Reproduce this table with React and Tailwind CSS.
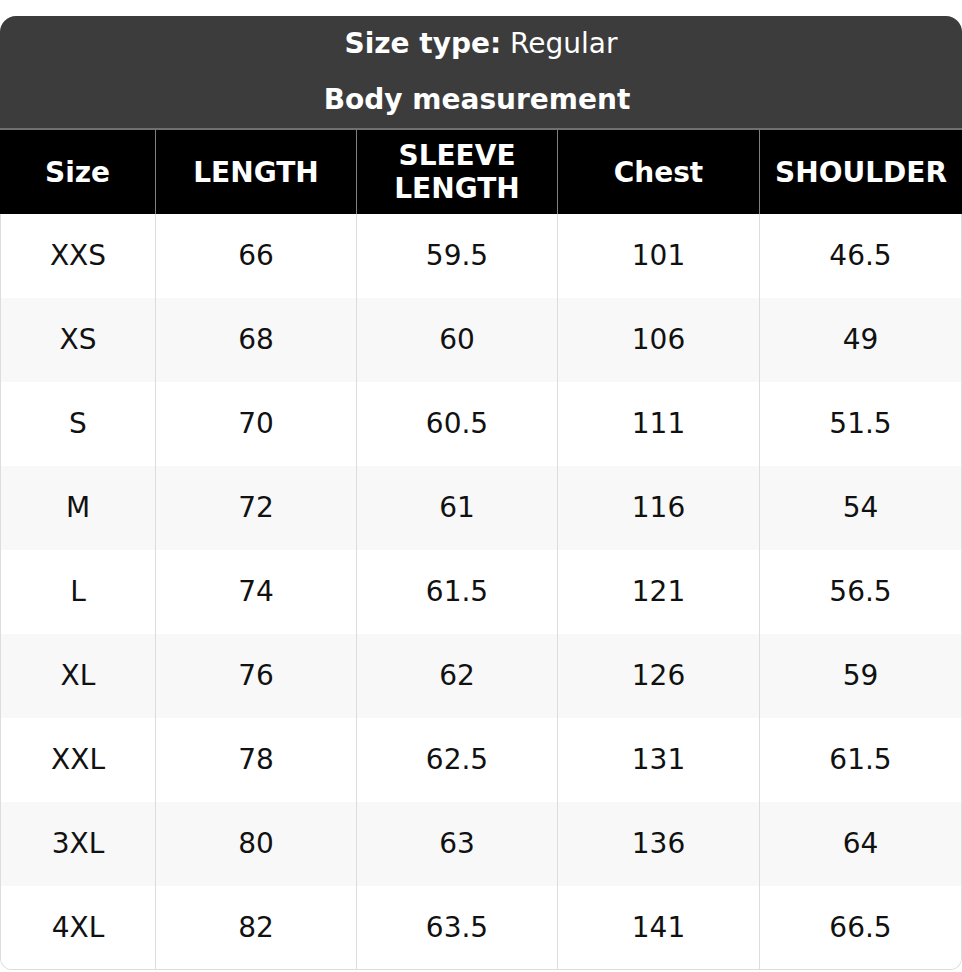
import React from "react";

const rows = [
  ["XXS", "66", "59.5", "101", "46.5"],
  ["XS", "68", "60", "106", "49"],
  ["S", "70", "60.5", "111", "51.5"],
  ["M", "72", "61", "116", "54"],
  ["L", "74", "61.5", "121", "56.5"],
  ["XL", "76", "62", "126", "59"],
  ["XXL", "78", "62.5", "131", "61.5"],
  ["3XL", "80", "63", "136", "64"],
  ["4XL", "82", "63.5", "141", "66.5"],
];

const heads = ["Size", "LENGTH", "SLEEVE LENGTH", "Chest", "SHOULDER"];

export default function App() {
  return (
    <div
      className="w-[962px] bg-white pt-[16px]"
      style={{ fontFamily: '"DejaVu Sans", sans-serif' }}
    >
      <div className="bg-[#3c3c3c] rounded-t-[16px] text-white text-[28px]">
        <div className="h-[56px] flex items-center justify-center">
          <span className="font-bold">Size type:</span>
          <span>&nbsp;Regular</span>
        </div>
        <div className="h-[56px] flex items-center justify-center font-bold pr-[8px]">
          Body measurement
        </div>
      </div>
      <div className="grid grid-cols-[155px_201px_201px_202px_1fr] bg-black border-t-2 border-[#707070] text-white font-bold text-[28px] leading-[33px]">
        {heads.map((h, i) => (
          <div
            key={h}
            className={`h-[84px] flex items-center justify-center text-center px-[14px] ${
              i > 0 ? "border-l border-[#808080]" : ""
            }`}
          >
            {h}
          </div>
        ))}
      </div>
      <div className="border-x border-b border-[#dddddd] rounded-b-[12px] overflow-hidden text-[28px] text-[#111111]">
        {rows.map((r, ri) => (
          <div
            key={ri}
            className={`grid grid-cols-[154px_201px_201px_202px_1fr] ${
              ri % 2 === 1 ? "bg-[#f8f8f8]" : "bg-white"
            }`}
          >
            {r.map((c, ci) => (
              <div
                key={ci}
                className={`${ri === rows.length - 1 ? "h-[83px]" : "h-[84px]"} flex items-center justify-center ${
                  ci > 0 ? "border-l border-[#dddddd]" : ""
                }`}
              >
                {c}
              </div>
            ))}
          </div>
        ))}
      </div>
    </div>
  );
}
